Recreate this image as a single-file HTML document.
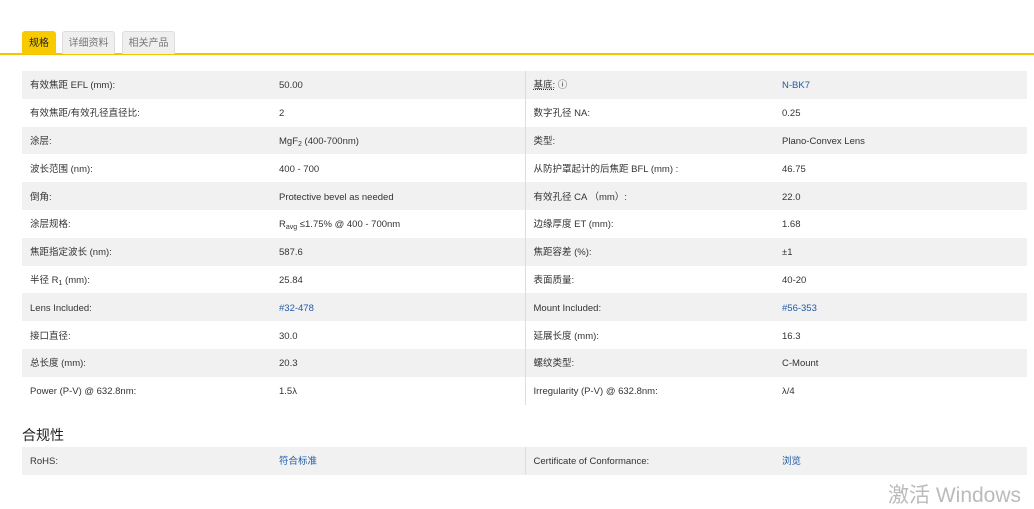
<!DOCTYPE html>
<html><head><meta charset="utf-8"><style>
body{margin:0;background:#fff;font-family:"Liberation Sans","Noto Sans CJK SC",sans-serif;color:#333;width:1034px;height:504px;overflow:hidden;position:relative}
.tabs{position:absolute;top:30px;left:0;width:1034px;height:25px;border-bottom:2px solid #f5c400;box-sizing:border-box}
.tab{position:absolute;top:1px;height:23px;line-height:24px;font-size:10px;text-align:center;background:#efefef;border:1px solid #ddd;border-bottom:none;color:#777;box-sizing:border-box;border-radius:3px 3px 0 0}
.tab.on{background:#f7cb00;color:#222;border-color:#f7cb00}
table{position:absolute;left:22px;width:1005px;border-collapse:collapse;font-size:9.5px;table-layout:fixed}
td{height:27.8px;padding:3px 0 0 8px;vertical-align:middle;white-space:nowrap;line-height:12px;box-sizing:border-box}
sub{font-size:7px;vertical-align:-2px;line-height:0}
tr:nth-child(odd) td{background:#f1f1f1}
td.c3{border-left:1px solid #ddd}
a{color:#1f5aa6;text-decoration:none}
h3{position:absolute;left:22px;top:425px;margin:0;font-size:14px;font-weight:normal;color:#222}
.win{position:absolute;left:888px;top:479px;font-size:21px;color:#bbb}
</style></head><body>
<div class="tabs">
<div class="tab on" style="left:22px;width:34px">规格</div>
<div class="tab" style="left:62px;width:53px">详细资料</div>
<div class="tab" style="left:122px;width:53px">相关产品</div>
</div>
<table style="top:71px">
<colgroup><col style="width:249px"><col style="width:254px"><col style="width:249px"><col></colgroup>
<tr><td>有效焦距 EFL (mm):</td><td>50.00</td><td class="c3"><u style="text-decoration-style:dotted">基底:</u> ⓘ</td><td><a>N-BK7</a></td></tr>
<tr><td>有效焦距/有效孔径直径比:</td><td>2</td><td class="c3">数字孔径 NA:</td><td>0.25</td></tr>
<tr><td>涂层:</td><td>MgF<sub>2</sub> (400-700nm)</td><td class="c3">类型:</td><td>Plano-Convex Lens</td></tr>
<tr><td>波长范围 (nm):</td><td>400 - 700</td><td class="c3">从防护罩起计的后焦距 BFL (mm) :</td><td>46.75</td></tr>
<tr><td>倒角:</td><td>Protective bevel as needed</td><td class="c3">有效孔径 CA （mm）:</td><td>22.0</td></tr>
<tr><td>涂层规格:</td><td>R<sub>avg</sub> ≤1.75% @ 400 - 700nm</td><td class="c3">边缘厚度 ET (mm):</td><td>1.68</td></tr>
<tr><td>焦距指定波长 (nm):</td><td>587.6</td><td class="c3">焦距容差 (%):</td><td>±1</td></tr>
<tr><td>半径 R<sub>1</sub> (mm):</td><td>25.84</td><td class="c3">表面质量:</td><td>40-20</td></tr>
<tr><td>Lens Included:</td><td><a>#32-478</a></td><td class="c3">Mount Included:</td><td><a>#56-353</a></td></tr>
<tr><td>接口直径:</td><td>30.0</td><td class="c3">延展长度 (mm):</td><td>16.3</td></tr>
<tr><td>总长度 (mm):</td><td>20.3</td><td class="c3">螺纹类型:</td><td>C-Mount</td></tr>
<tr><td>Power (P-V) @ 632.8nm:</td><td>1.5λ</td><td class="c3">Irregularity (P-V) @ 632.8nm:</td><td>λ/4</td></tr>
</table>
<h3>合规性</h3>
<table style="top:447px">
<colgroup><col style="width:249px"><col style="width:254px"><col style="width:249px"><col></colgroup>
<tr><td>RoHS:</td><td><a>符合标准</a></td><td class="c3">Certificate of Conformance:</td><td><a>浏览</a></td></tr>
</table>
<div class="win">激活 Windows</div>
</body></html>
